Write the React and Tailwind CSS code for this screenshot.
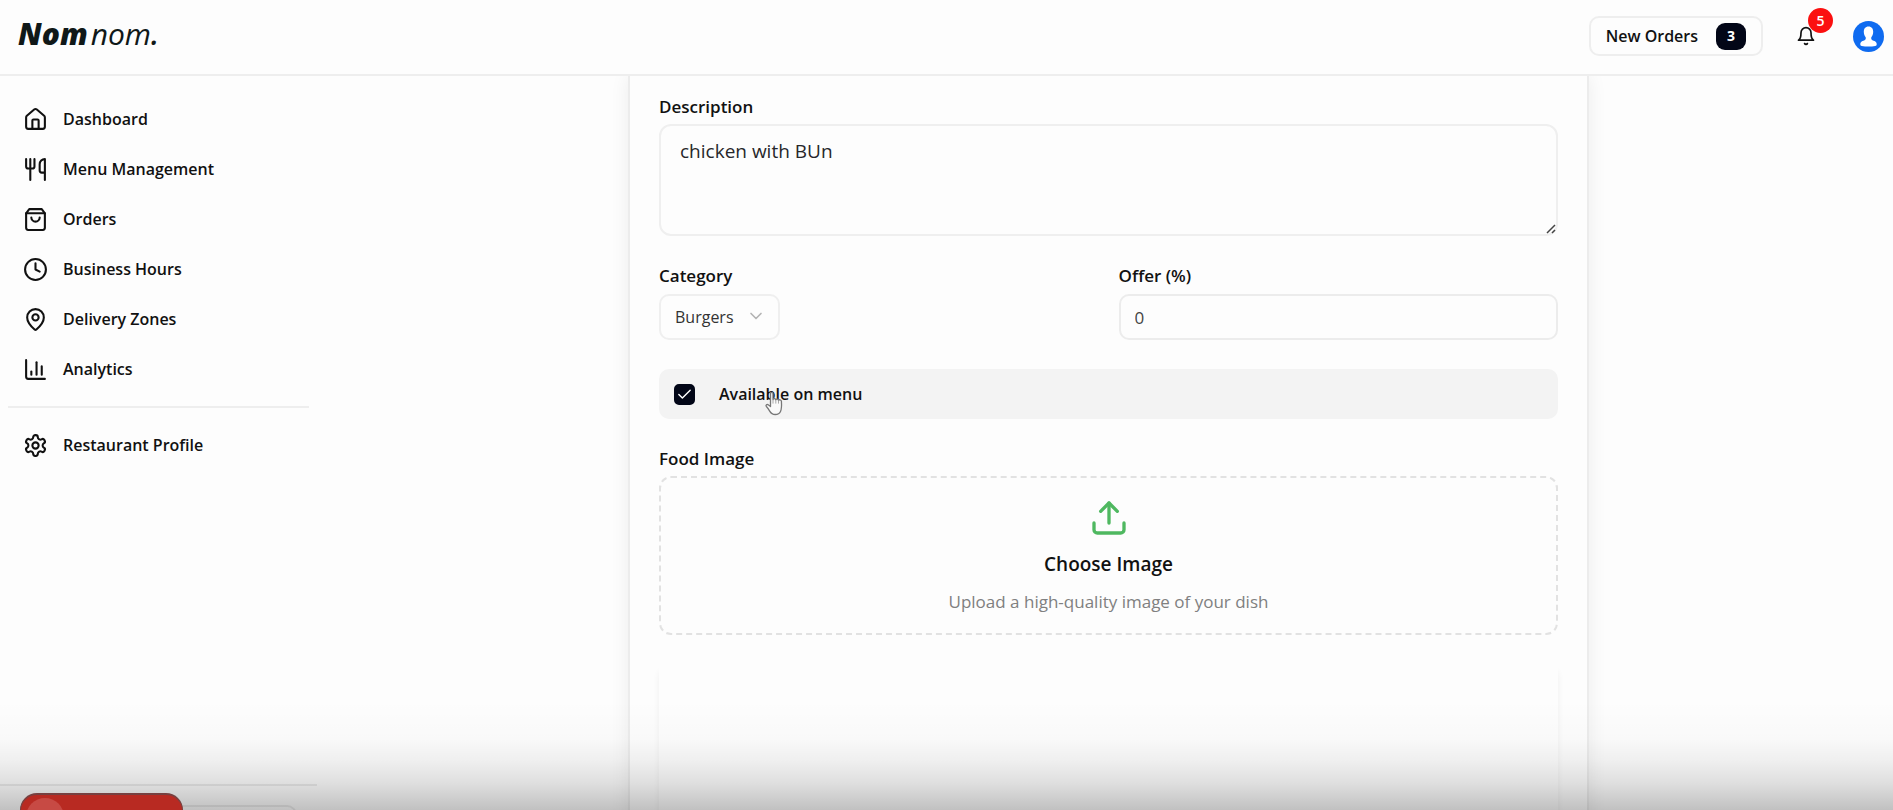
import { useState } from "react";

const iconProps = {
  viewBox: "0 0 24 24",
  fill: "none",
  stroke: "currentColor",
  strokeWidth: 2,
  strokeLinecap: "round",
  strokeLinejoin: "round",
  "aria-hidden": true,
};

const navItems = [
  {
    label: "Dashboard",
    icon: (
      <>
        <path d="M15 21v-8a1 1 0 0 0-1-1h-4a1 1 0 0 0-1 1v8" />
        <path d="M3 10a2 2 0 0 1 .709-1.528l7-5.999a2 2 0 0 1 2.582 0l7 5.999A2 2 0 0 1 21 10v9a2 2 0 0 1-2 2H5a2 2 0 0 1-2-2z" />
      </>
    ),
  },
  {
    label: "Menu Management",
    icon: (
      <>
        <path d="M3 2v7c0 1.1.9 2 2 2h4a2 2 0 0 0 2-2V2" />
        <path d="M7 2v20" />
        <path d="M21 15V2a5 5 0 0 0-5 5v6c0 1.1.9 2 2 2h3Zm0 0v7" />
      </>
    ),
  },
  {
    label: "Orders",
    icon: (
      <>
        <path d="M6 2 3 6v14a2 2 0 0 0 2 2h14a2 2 0 0 0 2-2V6l-3-4Z" />
        <path d="M3 6h18" />
        <path d="M16 10a4 4 0 0 1-8 0" />
      </>
    ),
  },
  {
    label: "Business Hours",
    icon: (
      <>
        <circle cx="12" cy="12" r="10" />
        <path d="M12 6v6l4 2" />
      </>
    ),
  },
  {
    label: "Delivery Zones",
    icon: (
      <>
        <path d="M20 10c0 4.993-5.539 10.193-7.399 11.799a1 1 0 0 1-1.202 0C9.539 20.193 4 14.993 4 10a8 8 0 0 1 16 0" />
        <circle cx="12" cy="10" r="3" />
      </>
    ),
  },
  {
    label: "Analytics",
    icon: (
      <>
        <path d="M3 3v16a2 2 0 0 0 2 2h16" />
        <path d="M18 17V9" />
        <path d="M13 17V5" />
        <path d="M8 17v-3" />
      </>
    ),
  },
];

const profileItem = {
  label: "Restaurant Profile",
  icon: (
    <>
      <path d="M12.22 2h-.44a2 2 0 0 0-2 2v.18a2 2 0 0 1-1 1.73l-.43.25a2 2 0 0 1-2 0l-.15-.08a2 2 0 0 0-2.73.73l-.22.38a2 2 0 0 0 .73 2.73l.15.1a2 2 0 0 1 1 1.72v.51a2 2 0 0 1-1 1.74l-.15.09a2 2 0 0 0-.73 2.73l.22.38a2 2 0 0 0 2.73.73l.15-.08a2 2 0 0 1 2 0l.43.25a2 2 0 0 1 1 1.73V20a2 2 0 0 0 2 2h.44a2 2 0 0 0 2-2v-.18a2 2 0 0 1 1-1.73l.43-.25a2 2 0 0 1 2 0l.15.08a2 2 0 0 0 2.73-.73l.22-.39a2 2 0 0 0-.73-2.73l-.15-.08a2 2 0 0 1-1-1.74v-.5a2 2 0 0 1 1-1.74l.15-.09a2 2 0 0 0 .73-2.73l-.22-.38a2 2 0 0 0-2.73-.73l-.15.08a2 2 0 0 1-2 0l-.43-.25a2 2 0 0 1-1-1.73V4a2 2 0 0 0-2-2z" />
      <circle cx="12" cy="12" r="3" />
    </>
  ),
};

function NavLink({ item }) {
  return (
    <a href="#" className="flex h-[50px] items-center gap-[15px] px-[15px] text-base font-semibold">
      <svg {...iconProps} className="size-[25px] shrink-0">
        {item.icon}
      </svg>
      {item.label}
    </a>
  );
}

function Header() {
  return (
    <header className="z-10 flex h-[76px] shrink-0 items-center justify-between border-b-2 border-[#eeeeee] bg-[#fdfdfd] pr-[9px] pb-[2px] pl-[18px]">
      <a href="#" className="flex items-baseline gap-[3px] pb-1 text-[30px] leading-10 italic text-[#101818]">
        <span className="font-extrabold">Nom</span>
        <span>
          nom<span className="font-semibold">.</span>
        </span>
      </a>
      <div className="flex items-center">
        <button
          type="button"
          className="flex h-10 items-center gap-[18px] rounded-[10px] border-2 border-[#eeeeee] px-[15px] text-base font-semibold"
        >
          New Orders
          <span className="flex h-[27px] w-[30px] items-center justify-center rounded-[9px] bg-[#020617] text-sm font-bold text-white">
            3
          </span>
        </button>
        <button type="button" aria-label="Notifications" className="relative ml-[33px] size-5">
          <svg {...iconProps} className="size-5">
            <path d="M6 8a6 6 0 0 1 12 0c0 7 3 9 3 9H3s3-2 3-9" />
            <path d="M10.3 21a1.94 1.94 0 0 0 3.4 0" />
          </svg>
          <span className="absolute -top-[18px] left-3 flex size-[25px] items-center justify-center rounded-full bg-[#fb1010] text-sm font-semibold text-white">
            5
          </span>
        </button>
        <button type="button" aria-label="Account" className="ml-[37px] size-[31px]">
          <svg viewBox="0 0 31 31" className="size-[31px]" aria-hidden="true">
            <circle cx="15.5" cy="15.5" r="15.5" fill="#0f6bf0" />
            <path
              fill="#fff"
              d="M15.5 5.500c3.200 0 4.700 2.300 4.700 5.200 0 2.600-.9 4.300-1.900 5.600-.3 2.200.3 2.900 2.300 3.500 2.300.7 3.100 1.800 3.100 3.500 0 1-.5 1.500-1.400 1.700-4.200.8-9.400.8-13.600 0-.9-.2-1.400-.7-1.400-1.700 0-1.700.8-2.800 3.100-3.500 2-.6 2.600-1.300 2.300-3.500-1-1.300-1.900-3-1.900-5.600 0-2.900 1.500-5.200 4.700-5.200z"
            />
          </svg>
        </button>
      </div>
    </header>
  );
}

function Sidebar() {
  return (
    <aside className="flex w-[324px] shrink-0 flex-col pt-[18px]">
      <nav className="px-2">
        {navItems.map((item) => (
          <NavLink key={item.label} item={item} />
        ))}
        <hr className="mt-3 mb-3 w-[301px] border-t-2 border-[#eeeeee]" />
        <NavLink item={profileItem} />
      </nav>
      <div className="mt-auto mr-[7px] h-[26px] overflow-hidden border-t-2 border-[#ebebeb] px-5 pt-[19px]">
        <button type="button" aria-label="Account menu" className="h-12 w-full rounded-[10px] border-2 border-[#ebebeb]" />
      </div>
    </aside>
  );
}

function FoodForm() {
  const [available, setAvailable] = useState(true);
  const [description, setDescription] = useState("chicken with BUn");
  const [offer, setOffer] = useState("0");

  return (
    <form className="w-full max-w-[961px] border-x-2 border-[#ececec] px-[29px] pt-[19px] shadow-[0_0_18px_rgba(0,0,0,0.07)]">
      <label htmlFor="description" className="block h-6 text-[17px] leading-6 font-semibold">
        Description
      </label>
      <div className="relative mt-[5px]">
        <textarea
          id="description"
          value={description}
          onChange={(e) => setDescription(e.target.value)}
          className="block h-[112px] w-full resize-y rounded-xl border-2 border-[#efefef] px-[19px] py-[13px] text-[19px] leading-6 text-[#27272a] outline-none [&::-webkit-resizer]:bg-transparent"
        />
        <svg
          viewBox="0 0 10 10"
          className="pointer-events-none absolute right-[2px] bottom-[2px] size-[10px]"
          aria-hidden="true"
        >
          <path d="M1 9 9 1M6 9l3-3" stroke="#444" strokeWidth="1.500" fill="none" />
        </svg>
      </div>

      <div className="mt-7 grid grid-cols-2 gap-5">
        <div>
          <label htmlFor="category" className="block h-6 text-[17px] leading-6 font-semibold">
            Category
          </label>
          <div className="relative mt-[6px] w-[121px]">
            <select
              id="category"
              className="h-[46px] w-full appearance-none rounded-[10px] border-2 border-[#efefef] pr-8 pl-[14px] text-base text-[#333] outline-none"
            >
              <option>Burgers</option>
            </select>
            <svg
              {...iconProps}
              className="pointer-events-none absolute top-3 right-[14px] size-5 text-[#b4b4b4]"
            >
              <path d="m6 9 6 6 6-6" />
            </svg>
          </div>
        </div>
        <div>
          <label htmlFor="offer" className="block h-6 text-[17px] leading-6 font-semibold">
            Offer (%)
          </label>
          <input
            id="offer"
            type="text"
            inputMode="numeric"
            value={offer}
            onChange={(e) => setOffer(e.target.value)}
            className="mt-[6px] block h-[46px] w-full rounded-[10px] border-2 border-[#ececec] px-[14px] text-[17px] text-[#444] outline-none"
          />
        </div>
      </div>

      <div className="mt-[29px] flex h-[50px] items-center rounded-[10px] bg-[#f3f3f3] pl-[15px]">
        <span className="relative size-[21px]">
          <input
            id="available"
            type="checkbox"
            checked={available}
            onChange={(e) => setAvailable(e.target.checked)}
            className="peer block size-[21px] appearance-none rounded-[5px] border-2 border-[#020617] checked:bg-[#020617]"
          />
          <svg
            {...iconProps}
            className="pointer-events-none absolute top-[2px] left-[2px] hidden size-[17px] text-white peer-checked:block"
          >
            <path d="M20 6 9 17l-5-5" />
          </svg>
        </span>
        <label htmlFor="available" className="relative ml-6 text-base font-semibold">
          Available on menu
          <svg viewBox="0 0 20 25" className="pointer-events-none absolute top-[9px] left-[45px] h-[25px] w-5" aria-hidden="true">
            <path
              d="M6.500 15.500V2.600C6.500.9 9 .9 9 2.600v6c.3-1.300 2.600-1.200 2.800.2.500-1.100 2.500-.9 2.700.5.600-.9 2.700-.7 2.900.8.200 3 .5 7.500-.9 10.300-.9 2-2.600 3.100-5.300 3.100-2.600 0-4.300-1.300-5.500-3.400-1-1.800-2-3.200-3.300-4.600-1.100-1.400.6-2.500 1.800-1.700z"
              fill="#fafafa"
              stroke="#777"
              strokeWidth="1.300"
              strokeLinejoin="round"
            />
            <path d="M9 8.600v4M11.800 9v3.600M14.500 9.500v3.100" stroke="#aaa" strokeWidth="1" fill="none" />
          </svg>
        </label>
      </div>

      <p id="food-image-label" className="mt-7 h-6 text-[17px] leading-6 font-semibold">
        Food Image
      </p>
      <button
        type="button"
        aria-describedby="food-image-label"
        className="mt-[5px] flex h-[159px] w-full flex-col items-center rounded-xl border-2 border-dashed border-[#e2e2e2] pt-5"
      >
        <svg {...iconProps} className="size-10 text-[#4fb860]">
          <path d="M21 15v4a2 2 0 0 1-2 2H5a2 2 0 0 1-2-2v-4" />
          <path d="m17 8-5-5-5 5" />
          <path d="M12 3v12" />
        </svg>
        <span className="mt-[14px] text-[19px] leading-6 font-semibold">Choose Image</span>
        <span className="mt-[14px] text-[17px] leading-6 text-[#808080]">
          Upload a high-quality image of your dish
        </span>
      </button>

      <div className="mt-[22px] h-[200px] rounded-xl shadow-[0_10px_7px_rgba(0,0,0,0.06)]" />
    </form>
  );
}

export default function App() {
  return (
    <div className="relative flex h-screen flex-col overflow-hidden bg-[#fdfdfd] font-['Open_Sans','Noto_Sans',sans-serif] text-[#111]">
      <Header />
      <div className="flex min-h-0 flex-1">
        <Sidebar />
        <main className="flex min-w-0 flex-1 items-start justify-center overflow-hidden">
          <FoodForm />
        </main>
      </div>
      <div className="pointer-events-none absolute inset-x-0 bottom-0 h-[110px] bg-[linear-gradient(to_bottom,rgba(0,0,0,0)_0%,rgba(0,0,0,0.015)_35%,rgba(0,0,0,0.055)_55%,rgba(0,0,0,0.12)_76%,rgba(0,0,0,0.24)_100%)]" />
      <div className="pointer-events-none absolute bottom-0 left-5 h-[17px] w-[163px] overflow-hidden rounded-t-[24px] border-x border-t-2 border-[#774040] bg-[#b82a22]">
        <div className="mt-[3px] ml-[5px] size-[38px] rounded-full bg-[#c74a44]" />
      </div>
    </div>
  );
}
